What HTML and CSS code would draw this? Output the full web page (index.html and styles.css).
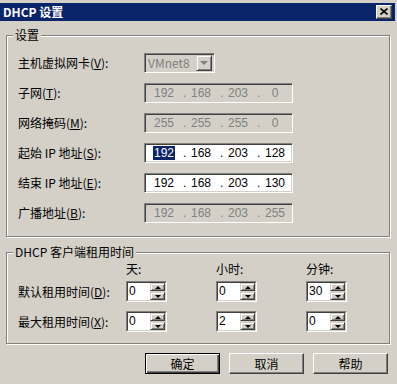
FILE: index.html
```html
<!DOCTYPE html>
<html lang="zh-CN">
<head>
<meta charset="utf-8">
<title>DHCP 设置</title>
<link rel="stylesheet" href="styles.css">
</head>
<body>
<div class="window">
  <div class="titlebar">
    <span class="title">DHCP 设置</span>
    <button class="close" aria-label="关闭">
      <svg width="8" height="7" viewBox="0 0 8 7"><path d="M0.5 0.5 L7.5 6.5 M7.5 0.5 L0.5 6.5" stroke="#000" stroke-width="1.6" fill="none"/></svg>
    </button>
  </div>

  <fieldset class="group g1">
    <legend>设置</legend>
    <div class="form">
      <span class="lbl">主机虚拟网卡(<u>V</u>):</span>
      <div class="combo">
        <span class="combo-text">VMnet8</span>
        <span class="combo-btn"><span class="arrow-down gray"></span></span>
      </div>

      <span class="lbl">子网(<u>T</u>):</span>
      <div class="ip disabled"><span class="oct">192</span><span class="dot">.</span><span class="oct">168</span><span class="dot">.</span><span class="oct">203</span><span class="dot">.</span><span class="oct">0</span></div>

      <span class="lbl">网络掩码(<u>M</u>):</span>
      <div class="ip disabled"><span class="oct">255</span><span class="dot">.</span><span class="oct">255</span><span class="dot">.</span><span class="oct">255</span><span class="dot">.</span><span class="oct">0</span></div>

      <span class="lbl">起始 IP 地址(<u>S</u>):</span>
      <div class="ip"><span class="oct"><span class="sel">192</span></span><span class="dot">.</span><span class="oct">168</span><span class="dot">.</span><span class="oct">203</span><span class="dot">.</span><span class="oct">128</span></div>

      <span class="lbl">结束 IP 地址(<u>E</u>):</span>
      <div class="ip"><span class="oct">192</span><span class="dot">.</span><span class="oct">168</span><span class="dot">.</span><span class="oct">203</span><span class="dot">.</span><span class="oct">130</span></div>

      <span class="lbl">广播地址(<u>B</u>):</span>
      <div class="ip disabled"><span class="oct">192</span><span class="dot">.</span><span class="oct">168</span><span class="dot">.</span><span class="oct">203</span><span class="dot">.</span><span class="oct">255</span></div>
    </div>
  </fieldset>

  <fieldset class="group g2">
    <legend>DHCP 客户端租用时间</legend>
    <div class="lease">
      <span></span>
      <span class="head">天:</span>
      <span class="head">小时:</span>
      <span class="head">分钟:</span>

      <span class="lbl">默认租用时间(<u>D</u>):</span>
      <div class="spin"><div class="spin-in"><span class="spin-val">0</span><span class="spin-btns"><span class="sb"><span class="arrow-up"></span></span><span class="sb"><span class="arrow-down"></span></span></span></div></div>
      <div class="spin"><div class="spin-in"><span class="spin-val">0</span><span class="spin-btns"><span class="sb"><span class="arrow-up"></span></span><span class="sb"><span class="arrow-down"></span></span></span></div></div>
      <div class="spin"><div class="spin-in"><span class="spin-val">30</span><span class="spin-btns"><span class="sb"><span class="arrow-up"></span></span><span class="sb"><span class="arrow-down"></span></span></span></div></div>

      <span class="lbl">最大租用时间(<u>X</u>):</span>
      <div class="spin"><div class="spin-in"><span class="spin-val">0</span><span class="spin-btns"><span class="sb"><span class="arrow-up"></span></span><span class="sb"><span class="arrow-down"></span></span></span></div></div>
      <div class="spin"><div class="spin-in"><span class="spin-val">2</span><span class="spin-btns"><span class="sb"><span class="arrow-up"></span></span><span class="sb"><span class="arrow-down"></span></span></span></div></div>
      <div class="spin"><div class="spin-in"><span class="spin-val">0</span><span class="spin-btns"><span class="sb"><span class="arrow-up"></span></span><span class="sb"><span class="arrow-down"></span></span></span></div></div>
    </div>
  </fieldset>

  <div class="buttons">
    <button class="btn default">确定</button>
    <button class="btn">取消</button>
    <button class="btn">帮助</button>
  </div>
</div>
</body>
</html>
```

FILE: styles.css
```css
* { box-sizing: border-box; }

html, body {
  margin: 0;
  padding: 0;
  background: #d4d0c8;
}

body {
  font-family: "Noto Sans CJK SC", "Liberation Sans", sans-serif;
  font-size: 12px;
  line-height: 14px;
  color: #000;
}

.window {
  width: 397px;
  height: 384px;
  padding: 3px 2px 0 0;
  background: #d4d0c8;
  overflow: hidden;
}

.titlebar {
  height: 18px;
  background: #0a246a;
  display: flex;
  align-items: center;
  padding: 0 3px 0 3px;
}

.title {
  color: #fff;
  font-weight: bold;
  font-size: 12px;
  line-height: 18px;
  flex: 1;
}

.close {
  width: 16px;
  height: 14px;
  padding: 0;
  margin: 0;
  background: #d4d0c8;
  border: 1px solid;
  border-color: #fff #404040 #404040 #fff;
  box-shadow: inset -1px -1px 0 #808080;
  display: flex;
  align-items: center;
  justify-content: center;
}
.close svg { display: block; margin: 0 1px 1px 0; }

/* group boxes */
.group {
  margin: 7px 0 0 6px;
  width: 384px;
  min-width: 0;
  padding: 0;
  border: 1px solid #808080;
  box-shadow: inset 1px 1px 0 #fff, 1px 1px 0 #fff;
}
.g2 { margin-top: 8px; }

.group legend {
  margin-left: 6px;
  padding: 0 2px;
  line-height: 14px;
  background: #d4d0c8;
}

.form {
  display: grid;
  grid-template-columns: 126px 149px;
  row-gap: 10px;
  align-items: center;
  padding: 11px 0 13px 11px;
}

.lbl { white-space: nowrap; line-height: 20px; }

/* sunken controls */
.combo, .ip {
  height: 20px;
  border: 1px solid;
  border-color: #808080 #fff #fff #808080;
  box-shadow: inset 1px 1px 0 #404040, inset -1px -1px 0 #d4d0c8;
}

.combo {
  width: 71px;
  display: flex;
  align-items: center;
  padding: 2px 2px 2px 3px;
  background: #d4d0c8;
}
.combo-text { flex: 1; color: #808080; line-height: 16px; }
.combo-btn {
  width: 16px;
  height: 16px;
  border: 1px solid;
  border-color: #d4d0c8 #404040 #404040 #d4d0c8;
  box-shadow: inset 1px 1px 0 #fff, inset -1px -1px 0 #808080;
  display: flex;
  align-items: center;
  justify-content: center;
}

.arrow-down, .arrow-up {
  width: 0;
  height: 0;
  border-left: 3px solid transparent;
  border-right: 3px solid transparent;
}
.arrow-down { border-top: 3px solid #000; }
.arrow-up { border-bottom: 3px solid #000; }
.combo-btn .arrow-down { border-left-width: 4px; border-right-width: 4px; border-top-width: 4px; }
.arrow-down.gray { border-top-color: #808080; }

.ip {
  width: 149px;
  display: flex;
  align-items: center;
  padding-left: 5px;
  background: #fff;
  font-family: "Liberation Sans", Arial, sans-serif;
  font-size: 12px;
  line-height: 16px;
}
.ip.disabled { background: #d4d0c8; color: #808080; }

.oct { width: 28px; text-align: center; }
.dot { width: 9px; padding-left: 5px; }
.sel { background: #0a246a; color: #fff; padding: 0 1px; }

/* lease grid: rows sized so controls sit at the bottom of each track */
.lease {
  display: grid;
  grid-template-columns: 108px 90px 90px 41px;
  grid-template-rows: 14px 26px 30px;
  align-items: end;
  padding: 3px 0 11px 11px;
}
.lease .lbl { line-height: 21px; }

.head { line-height: 14px; }

.spin {
  width: 41px;
  height: 21px;
  border: 1px solid;
  border-color: #808080 #fff #fff #808080;
  display: flex;
}
.spin-in {
  flex: 1;
  display: flex;
  border: 1px solid;
  border-color: #404040 #d4d0c8 #d4d0c8 #404040;
  background: #fff;
}
.spin-val {
  flex: 1;
  font-family: "Liberation Sans", Arial, sans-serif;
  font-size: 12px;
  line-height: 17px;
  padding-left: 1px;
}
.spin-btns {
  width: 15px;
  display: flex;
  flex-direction: column;
  gap: 1px;
  background: #d4d0c8;
}
.sb {
  flex: 1;
  border: 1px solid;
  border-color: #d4d0c8 #404040 #404040 #d4d0c8;
  box-shadow: inset 1px 1px 0 #fff, inset -1px -1px 0 #808080;
  background: #d4d0c8;
  display: flex;
  align-items: center;
  justify-content: center;
}

/* buttons */
.buttons {
  display: flex;
  justify-content: flex-end;
  gap: 9px;
  padding-right: 7px;
  margin-top: 9px;
}
.btn {
  width: 75px;
  height: 21px;
  margin: 0;
  padding: 0;
  font-family: "Noto Sans CJK SC", "Liberation Sans", sans-serif;
  font-size: 12px;
  line-height: 17px;
  color: #000;
  background: #d4d0c8;
  border: 1px solid;
  border-color: #fff #404040 #404040 #fff;
  box-shadow: inset -1px -1px 0 #808080;
}
.btn.default {
  border-color: #000;
  box-shadow: inset 1px 1px 0 #fff, inset -1px -1px 0 #404040, inset -2px -2px 0 #808080;
}
```
